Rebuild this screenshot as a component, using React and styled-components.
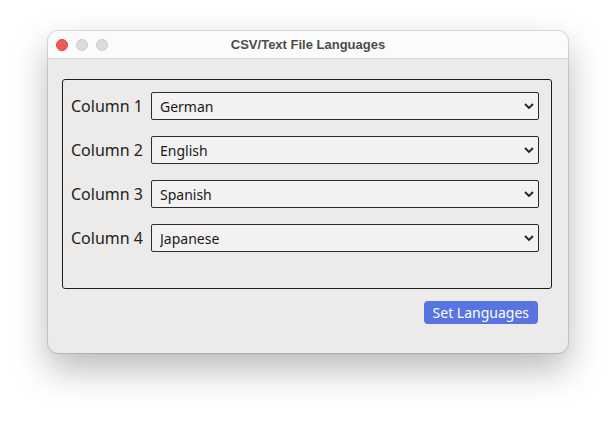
import styled, { createGlobalStyle } from "styled-components";

const GlobalStyle = createGlobalStyle`
  html, body {
    margin: 0;
    padding: 0;
    background: #ffffff;
  }
`;

const Page = styled.div`
  padding: 31px 0 0 48px;
  width: 616px;
  height: 421px;
  box-sizing: border-box;
`;

const Window = styled.div`
  width: 520px;
  height: 322px;
  border-radius: 10px;
  background: #ecebea;
  box-shadow: 0 0 0 1px rgba(0, 0, 0, 0.12), 0 16px 36px rgba(0, 0, 0, 0.28);
  display: flex;
  flex-direction: column;
  overflow: hidden;
  font-family: "Noto Sans", "Open Sans", sans-serif;
`;

const TitleBar = styled.div`
  height: 27px;
  flex: none;
  background: #fbfbfb;
  border-bottom: 1px solid #d8d8d8;
  display: flex;
  align-items: center;
  position: relative;
`;

const Lights = styled.div`
  display: flex;
  gap: 8px;
  padding-left: 8px;
`;

const Light = styled.span`
  width: 12px;
  height: 12px;
  border-radius: 50%;
  box-sizing: border-box;
  background: ${(p) => p.$color};
  border: 1px solid ${(p) => p.$edge};
`;

const Title = styled.div`
  position: absolute;
  left: 0;
  right: 0;
  text-align: center;
  font-family: "Liberation Sans", Arial, sans-serif;
  font-weight: bold;
  font-size: 13px;
  color: #4c4c4c;
`;

const Body = styled.div`
  flex: 1;
  padding: 20px 16px 0 14px;
  display: flex;
  flex-direction: column;
`;

const Group = styled.div`
  border: 1px solid #1e1e1e;
  border-radius: 3px;
  height: 210px;
  box-sizing: border-box;
  padding: 12px 12px 0 8px;
  display: flex;
  flex-direction: column;
  gap: 16px;
`;

const Row = styled.div`
  display: flex;
  align-items: center;
  height: 28px;
`;

const Label = styled.label`
  width: 80px;
  font-size: 16px;
  color: #222;
`;

const SelectWrap = styled.div`
  position: relative;
  flex: 1;
  height: 28px;
`;

const Select = styled.select`
  appearance: none;
  width: 100%;
  height: 100%;
  box-sizing: border-box;
  border: 1px solid #2c2c2c;
  border-radius: 2px;
  background: #f3f1f1;
  padding: 0 24px 0 8px;
  font-family: "Noto Sans", "Open Sans", sans-serif;
  font-size: 14px;
  color: #1a1a1a;
  outline: none;
`;

const Chevron = styled.svg`
  position: absolute;
  right: 5px;
  top: 10px;
  pointer-events: none;
`;

const Footer = styled.div`
  display: flex;
  justify-content: flex-end;
  padding: 12px 14px 0 0;
`;

const Button = styled.button`
  height: 23px;
  padding: 0 9px;
  border: none;
  border-radius: 4px;
  background: #5774e0;
  color: #ffffff;
  font-family: "Noto Sans", "Open Sans", sans-serif;
  font-size: 14px;
`;

const columns = [
  ["Column 1", "German"],
  ["Column 2", "English"],
  ["Column 3", "Spanish"],
  ["Column 4", "Japanese"],
];

const languages = ["German", "English", "Spanish", "Japanese", "French"];

export default function App() {
  return (
    <>
      <GlobalStyle />
      <Page>
        <Window>
          <TitleBar>
            <Lights>
              <Light $color="#ee5b52" $edge="#d9463e" />
              <Light $color="#dcdcdc" $edge="#c9c9c9" />
              <Light $color="#dcdcdc" $edge="#c9c9c9" />
            </Lights>
            <Title>CSV/Text File Languages</Title>
          </TitleBar>
          <Body>
            <Group>
              {columns.map(([label, lang]) => (
                <Row key={label}>
                  <Label>{label}</Label>
                  <SelectWrap>
                    <Select defaultValue={lang}>
                      {languages.map((l) => (
                        <option key={l}>{l}</option>
                      ))}
                    </Select>
                    <Chevron width="10" height="8" viewBox="0 0 10 8">
                      <path d="M1 2 L5 6 L9 2" fill="none" stroke="#222" strokeWidth="1.8" />
                    </Chevron>
                  </SelectWrap>
                </Row>
              ))}
            </Group>
            <Footer>
              <Button>Set Languages</Button>
            </Footer>
          </Body>
        </Window>
      </Page>
    </>
  );
}
